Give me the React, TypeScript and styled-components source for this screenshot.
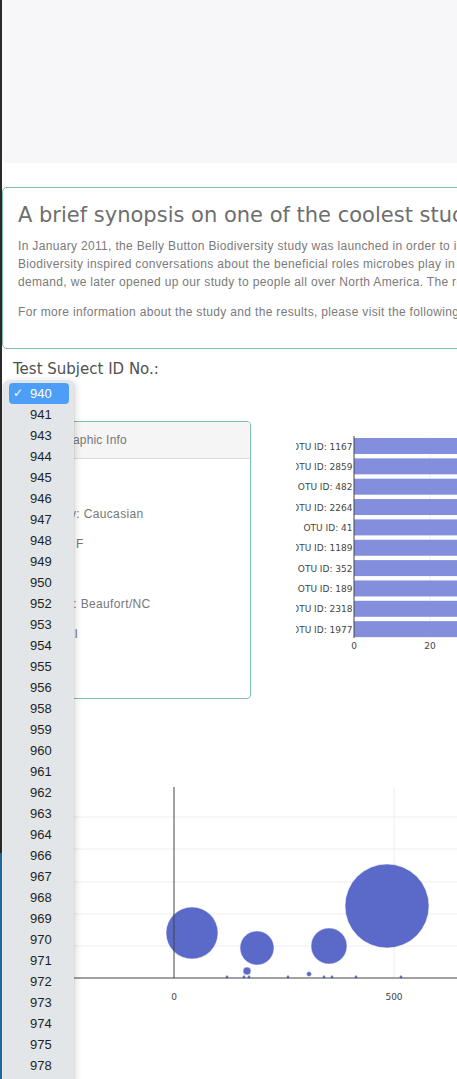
import * as React from 'react'
import styled, { createGlobalStyle } from 'styled-components'

const GlobalStyle = createGlobalStyle`
  html, body {
    margin: 0;
    padding: 0;
    overflow: hidden;
    background: #ffffff;
  }
  body {
    font-family: "Liberation Sans", Arial, sans-serif;
  }
`

const Frame = styled.div`
  display: flex;
  width: 100vw;
  height: 100vh;
  overflow: hidden;
`

const Edge = styled.div`
  flex: 0 0 2px;
  background: linear-gradient(to bottom, #2b2a2a 0, #2b2a2a 853px, #1b6aa2 853px, #1b6aa2 100%);
`

const Page = styled.div`
  position: relative;
  flex: 0 0 1100px;
  height: 100%;
`

const Jumbotron = styled.div`
  height: 163px;
  background: #f7f7f9;
  border-radius: 0 0 6px 6px;
`

const Panel = styled.section`
  margin-top: 24px;
  padding: 15px;
  border: 1px solid #7ec2a6;
  border-radius: 5px;
`

const Title = styled.h1`
  margin: 0 0 10px;
  font-family: "DejaVu Sans", sans-serif;
  font-weight: 400;
  font-size: 21px;
  line-height: 24px;
  color: #6e6e6e;
  white-space: nowrap;
`

const Text = styled.p`
  margin: 0 0 12px;
  font-size: 12px;
  line-height: 18px;
  letter-spacing: 0.33px;
  color: #7a7a7a;
  white-space: nowrap;
`

const Container = styled.div`
  padding-left: 11px;
`

const Label = styled.div`
  margin-top: 10px;
  font-family: "DejaVu Sans", sans-serif;
  font-size: 15px;
  line-height: 20px;
  color: #505050;
`

const SelectBox = styled.div`
  margin-top: 4px;
  width: 56px;
  height: 20px;
  font-size: 13px;
  line-height: 20px;
  color: #222;
`

const Row = styled.div`
  display: flex;
  align-items: flex-start;
  margin-top: 18px;
`

const Card = styled.div`
  width: 236px;
  height: 276px;
  border: 1px solid #7ec2a6;
  border-radius: 4px;
  overflow: hidden;
`

const CardHeader = styled.div`
  height: 36px;
  padding: 0 15px;
  background: #f5f5f5;
  border-bottom: 1px solid #dcdcdc;
  font-size: 12px;
  line-height: 36px;
  letter-spacing: 0.2px;
  color: #777;
`

const CardBody = styled.div`
  padding: 10px 15px 0;
`

const InfoLine = styled.div`
  height: 30px;
  font-size: 12px;
  line-height: 30px;
  letter-spacing: 0.36px;
  color: #777;
`

const BarSvg = styled.svg`
  display: block;
  margin-left: 45px;
  overflow: hidden;
`

const BubbleSvg = styled.svg`
  display: block;
  margin-top: 61px;
`

const Menu = styled.ul`
  position: absolute;
  left: 1px;
  top: 381px;
  width: 71px;
  height: 720px;
  margin: 0;
  padding: 2px 0 0;
  list-style: none;
  background: #e3e6e9;
  border-radius: 6px 6px 0 0;
  box-shadow: 2px 0 6px rgba(0, 0, 0, 0.14), 0 0 0 0.5px rgba(0, 0, 0, 0.08);
`

const MenuItem = styled.li<{ $selected?: boolean }>`
  position: relative;
  height: 21px;
  margin: 0 5px 0 6px;
  padding-left: 21px;
  border-radius: 4px;
  font-family: "Liberation Sans", Arial, sans-serif;
  font-size: 13px;
  line-height: 21px;
  color: ${({ $selected }) => ($selected ? '#ffffff' : '#1f1f1f')};
  background: ${({ $selected }) => ($selected ? '#4d9ef6' : 'transparent')};
`

const Check = styled.span`
  position: absolute;
  left: 4px;
  top: 0;
  font-family: "DejaVu Sans", sans-serif;
  font-size: 12px;
`

const ids = [
  940, 941, 943, 944, 945, 946, 947, 948, 949, 950, 952, 953, 954, 955, 956,
  958, 959, 960, 961, 962, 963, 964, 966, 967, 968, 969, 970, 971, 972, 973,
  974, 975, 978,
]

const metadata: Array<[string, string]> = [
  ['id', '940'],
  ['ethnicity', 'Caucasian'],
  ['gender', 'F'],
  ['age', '24'],
  ['location', 'Beaufort/NC'],
  ['bbtype', 'I'],
  ['wfreq', '2'],
]

const otus: Array<[number, number]> = [
  [1167, 163],
  [2859, 126],
  [482, 113],
  [2264, 78],
  [41, 71],
  [1189, 51],
  [352, 50],
  [189, 47],
  [2318, 40],
  [1977, 40],
]

// cx, cy, r in chart pixels
const bubbles: Array<[number, number, number]> = [
  [179, 173, 26],
  [244, 188, 17],
  [234, 211, 4],
  [316, 186, 18],
  [296, 214, 2.5],
  [374, 146, 42],
]
const dots = [214, 231, 236, 275, 311, 319, 343, 388]

const BarChart = () => {
  const axisX = 58
  const scale = 3.8
  return (
    <BarSvg width={400} height={240}>
      <line x1={134} x2={134} y1={16} y2={217} stroke="#eeeeee" />
      {otus.map(([id, value], i) => {
        const y = 17 + i * 20.35
        return (
          <g key={id}>
            <rect x={axisX} y={y} width={value * scale} height={16} fill="#838fdc" />
            <text
              x={axisX - 1.5}
              y={y + 11.5}
              textAnchor="end"
              fontFamily="DejaVu Sans, sans-serif"
              fontSize={9}
              fill="#444"
            >
              OTU ID: {id}
            </text>
          </g>
        )
      })}
      <line x1={axisX} x2={axisX} y1={15} y2={217} stroke="#444" />
      <text x={axisX} y={228} textAnchor="middle" fontFamily="DejaVu Sans, sans-serif" fontSize={9} fill="#444">
        0
      </text>
      <text x={134} y={228} textAnchor="middle" fontFamily="DejaVu Sans, sans-serif" fontSize={9} fill="#444">
        20
      </text>
    </BarSvg>
  )
}

const BubbleChart = () => (
  <BubbleSvg width={600} height={260}>
    {[57, 89, 122, 154, 186].map((y) => (
      <line key={y} x1={0} x2={600} y1={y} y2={y} stroke="#eeeeee" />
    ))}
    <line x1={381} x2={381} y1={27} y2={218} stroke="#eeeeee" />
    {bubbles.map(([cx, cy, r]) => (
      <circle key={`${cx}-${cy}`} cx={cx} cy={cy} r={r} fill="#3e4fc0" fillOpacity={0.85} stroke="#ffffff" strokeWidth={0.5} />
    ))}
    {dots.map((x) => (
      <circle key={x} cx={x} cy={217} r={1.4} fill="#6b78cf" />
    ))}
    <line x1={161} x2={161} y1={27} y2={218} stroke="#444" />
    <line x1={0} x2={600} y1={218} y2={218} stroke="#444" />
    <text x={161} y={240} textAnchor="middle" fontFamily="DejaVu Sans, sans-serif" fontSize={9} fill="#444">
      0
    </text>
    <text x={381} y={240} textAnchor="middle" fontFamily="DejaVu Sans, sans-serif" fontSize={9} fill="#444">
      500
    </text>
  </BubbleSvg>
)

export default function App() {
  return (
    <>
      <GlobalStyle />
      <Frame>
        <Edge />
        <Page>
          <Jumbotron />
          <Panel>
            <Title>A brief synopsis on one of the coolest studies ever done on belly buttons</Title>
            <Text>
              In January 2011, the Belly Button Biodiversity study was launched in order to investigate the
              microbes inhabiting our navels and the factors that might influence the microscopic life calling
              <br />
              Biodiversity inspired conversations about the beneficial roles microbes play in our daily lives.
              Originally a project of the Public Science Lab, due to high
              <br />
              demand, we later opened up our study to people all over North America. The results are shared below.
            </Text>
            <Text>
              For more information about the study and the results, please visit the following link: Belly Button
              Biodiversity
            </Text>
          </Panel>
          <Container>
            <Label>Test Subject ID No.:</Label>
            <SelectBox>940</SelectBox>
            <Row>
              <Card>
                <CardHeader>Demographic Info</CardHeader>
                <CardBody>
                  {metadata.map(([key, value]) => (
                    <InfoLine key={key}>
                      {key}: {value}
                    </InfoLine>
                  ))}
                </CardBody>
              </Card>
              <BarChart />
            </Row>
            <BubbleChart />
          </Container>
          <Menu>
            {ids.map((id) => (
              <MenuItem key={id} $selected={id === 940}>
                {id === 940 && <Check>✓</Check>}
                {id}
              </MenuItem>
            ))}
          </Menu>
        </Page>
      </Frame>
    </>
  )
}
